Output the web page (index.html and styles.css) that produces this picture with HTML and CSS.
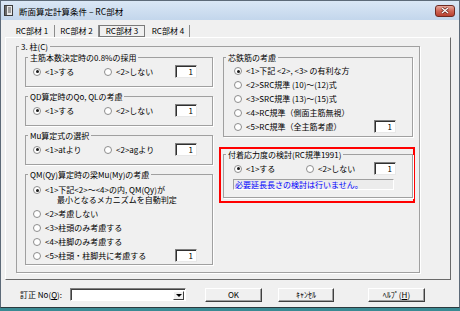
FILE: index.html
```html
<!DOCTYPE html>
<html lang="ja">
<head>
  <meta charset="UTF-8" />
  <title>断面算定計算条件 – RC部材</title>
  <link rel="stylesheet" href="styles.css">
</head>
<body>
  <div class="window">
    <div class="titlebar">
      <svg class="app-icon" width="9" height="11" viewBox="0 0 9 11">
        <rect x="0.5" y="0.5" width="8" height="10" fill="#e8e8e8" stroke="#3c3c3c"/>
        <rect x="1" y="1" width="2" height="9" fill="#6a6a6a"/>
        <path d="M4 3h3M4 5h3M4 7h3" stroke="#555" stroke-width="1"/>
      </svg>
      <span class="title">断面算定計算条件 – RC部材</span>
      <span class="close">
        <svg width="8" height="7" viewBox="0 0 8 7">
          <path d="M1 1l6 5M7 1l-6 5" stroke="#5a1a12" stroke-width="2.6"/>
          <path d="M1 1l6 5M7 1l-6 5" stroke="#fff" stroke-width="1.4"/>
        </svg>
      </span>
    </div>

    <div class="client">
      <div class="tabs">
        <span class="tab t1">RC部材 1</span>
        <span class="tab t2">RC部材 2</span>
        <span class="tab active">RC部材 3</span>
        <span class="tab t4">RC部材 4</span>
      </div>

      <div class="tab-panel">
        <fieldset class="group outer">
          <legend>3. 柱(C)</legend>
          <div class="columns">
            <div class="col">
              <fieldset class="group">
                <legend>主筋本数決定時の0.8%の採用</legend>
                <div class="choice-row">
                  <span class="opt"><span class="radio on"></span>&lt;1&gt;する</span>
                  <span class="opt"><span class="radio"></span>&lt;2&gt;しない</span>
                  <span class="num">1</span>
                </div>
              </fieldset>

              <fieldset class="group">
                <legend>QD算定時のQo, QLの考慮</legend>
                <div class="choice-row">
                  <span class="opt"><span class="radio on"></span>&lt;1&gt;する</span>
                  <span class="opt"><span class="radio"></span>&lt;2&gt;しない</span>
                  <span class="num">1</span>
                </div>
              </fieldset>

              <fieldset class="group">
                <legend>Mu算定式の選択</legend>
                <div class="choice-row">
                  <span class="opt"><span class="radio on"></span>&lt;1&gt;atより</span>
                  <span class="opt"><span class="radio"></span>&lt;2&gt;agより</span>
                  <span class="num">1</span>
                </div>
              </fieldset>

              <fieldset class="group">
                <legend>QM(Qy)算定時の梁Mu(My)の考慮</legend>
                <div class="list">
                  <span class="opt two-line">
                    <span class="radio on"></span>
                    <span>&lt;1&gt;下記&lt;2&gt;〜&lt;4&gt;の内, QM(Qy)が<br><span class="indent">最小となるメカニズムを自動判定</span></span>
                  </span>
                  <span class="opt"><span class="radio"></span>&lt;2&gt;考慮しない</span>
                  <span class="opt"><span class="radio"></span>&lt;3&gt;柱頭のみ考慮する</span>
                  <span class="opt"><span class="radio"></span>&lt;4&gt;柱脚のみ考慮する</span>
                  <div class="list-row left">
                    <span class="opt"><span class="radio"></span>&lt;5&gt;柱頭・柱脚共に考慮する</span>
                    <span class="num inline">1</span>
                  </div>
                </div>
              </fieldset>
            </div>

            <div class="col">
              <fieldset class="group">
                <legend>芯鉄筋の考慮</legend>
                <div class="list wide">
                  <span class="opt"><span class="radio on"></span>&lt;1&gt;下記 &lt;2&gt;, &lt;3&gt; の有利な方</span>
                  <span class="opt"><span class="radio"></span>&lt;2&gt;SRC規準 (10)〜(12)式</span>
                  <span class="opt"><span class="radio"></span>&lt;3&gt;SRC規準 (13)〜(15)式</span>
                  <span class="opt"><span class="radio"></span>&lt;4&gt;RC規準（側面主筋無視）</span>
                  <div class="list-row right">
                    <span class="opt"><span class="radio"></span>&lt;5&gt;RC規準（全主筋考慮）</span>
                    <span class="num inline">1</span>
                  </div>
                </div>
              </fieldset>

              <div class="highlight">
                <fieldset class="group">
                  <legend>付着応力度の検討(RC規準1991)</legend>
                  <div class="bond">
                    <div class="choice-row bond-row">
                      <span class="opt"><span class="radio on"></span>&lt;1&gt;する</span>
                      <span class="opt"><span class="radio"></span>&lt;2&gt;しない</span>
                      <span class="num">1</span>
                    </div>
                    <div class="status">必要延長長さの検討は行いません。</div>
                  </div>
                </fieldset>
              </div>
            </div>
          </div>
        </fieldset>
      </div>

      <div class="footer">
        <span class="footer-label">訂正 No(<u>Q</u>):</span>
        <span class="combo"><span class="combo-btn"><span class="arrow"></span></span></span>
        <span class="btn ok">OK</span>
        <span class="btn cancel">ｷｬﾝｾﾙ</span>
        <span class="btn help">ﾍﾙﾌﾟ(<u>H</u>)</span>
      </div>
    </div>
  </div>
</body>
</html>
```

FILE: styles.css
```css
* {
  box-sizing: border-box;
}
body {
  margin: 0;
  background-color: #3a8a93;
  font-family: "Noto Sans CJK JP", "DejaVu Sans", sans-serif;
  font-size: 8px;
  color: #000;
}
.window {
  width: 460px;
  height: 308px;
  background-color: #f0f0f0;
  border: 1px solid #5d6a78;
  border-bottom-color: #2b3a3e;
}

/* title bar */
.titlebar {
  height: 19px;
  display: flex;
  align-items: center;
  padding: 0 4px 0 3px;
  background: linear-gradient(#dae7f5, #c3d6ec);
}
.app-icon {
  margin-right: 6px;
}
.title {
  flex: 1;
  font-size: 8.5px;
  line-height: 12px;
}
.close {
  width: 20px;
  height: 12px;
  display: flex;
  align-items: center;
  justify-content: center;
  border: 1px solid #6e2a22;
  border-radius: 3px;
  background: linear-gradient(#e6a89c, #cf6555 50%, #b9402f);
}

/* client area */
.client {
  padding: 5px 4px 0 4px;
}
.tabs {
  display: flex;
  height: 12px;
  margin-left: 5px;
}
.tab {
  height: 12px;
  line-height: 12px;
  text-align: center;
  white-space: nowrap;
  border-right: 1px solid #8c8c8c;
}
.tab.t1 { width: 45px; }
.tab.t2 { width: 44px; }
.tab.t4 { width: 43px; }
.tab.active {
  width: 46px;
  margin-right: 2px;
  border: 1px solid #7a7a7a;
  line-height: 10px;
}
.tab-panel {
  width: 446px;
  height: 243px;
  padding: 3px 0 0 10px;
  border: 1px solid;
  border-color: #ffffff #6a6a6a #6a6a6a #ffffff;
}

/* group boxes */
.group {
  margin: 0;
  padding: 0;
  min-width: 0;
  border: 1px solid #a0a0a0;
  box-shadow: 1px 1px 0 #fff;
}
.group legend {
  margin-left: 2px;
  padding: 0 2px;
  line-height: 11px;
  white-space: nowrap;
}
.outer {
  width: 404px;
}
.columns {
  display: grid;
  grid-template-columns: 188px 190px;
  column-gap: 10px;
  align-items: start;
  padding: 0 0 7px 8px;
}
.col {
  display: flex;
  flex-direction: column;
  gap: 4px;
}

/* options */
.choice-row {
  display: grid;
  grid-template-columns: 71px 71px 22px;
  align-items: center;
  height: 13px;
  margin: 2px 0 8px 7px;
}
.opt {
  display: flex;
  align-items: center;
  white-space: nowrap;
  line-height: 10px;
}
.radio {
  flex: none;
  width: 8px;
  height: 8px;
  margin-right: 4px;
  border-radius: 50%;
  border: 1px solid #8d8d8d;
  background-color: #fff;
  display: inline-flex;
  align-items: center;
  justify-content: center;
}
.radio.on::after {
  content: "";
  width: 3px;
  height: 3px;
  border-radius: 50%;
  background-color: #1a1a1a;
}
.num {
  width: 22px;
  height: 13px;
  padding-right: 3px;
  text-align: right;
  line-height: 11px;
  background-color: #fff;
  border: 1px solid;
  border-color: #808080 #e8e8e8 #e8e8e8 #808080;
  box-shadow: inset 1px 1px 0 #303030;
}
.num.inline {
  margin: -2px 0 -1px;
}
.list {
  display: flex;
  flex-direction: column;
  gap: 4px;
  padding: 5px 0 3px 7px;
}
.list.wide {
  padding: 3px 0 4px 10px;
}
.two-line {
  align-items: flex-start;
}
.two-line .radio {
  margin-top: 1px;
}
.indent {
  padding-left: 12px;
}
.list-row {
  display: grid;
  align-items: center;
  height: 10px;
}
.list-row.left { grid-template-columns: 142px 22px; }
.list-row.right { grid-template-columns: 140px 22px; }

/* highlighted bond check */
.highlight {
  border: 2px solid #ff0000;
  margin: 6px -2px 0 -4px;
  padding: 0 0 3px 2px;
}
.bond {
  padding: 2px 0 7px 10px;
}
.bond-row {
  grid-template-columns: 72px 68px 22px;
  margin: 0;
}
.status {
  width: 161px;
  height: 11px;
  margin: 4px 0 0 -1px;
  padding-left: 1px;
  line-height: 9px;
  color: #0000ff;
  background-color: #ececec;
  border: 1px solid;
  border-color: #a0a0a0 #ffffff #ffffff #a0a0a0;
  white-space: nowrap;
}

/* footer */
.footer {
  display: flex;
  align-items: flex-start;
  height: 14px;
  margin-top: 8px;
  padding-left: 15px;
}
.footer-label {
  width: 50px;
  line-height: 13px;
  white-space: nowrap;
}
.combo {
  width: 116px;
  height: 13px;
  padding: 2px 1px 1px 2px;
  display: flex;
  justify-content: flex-end;
  background-color: #fff;
  border: 1px solid;
  border-color: #808080 #fff #fff #808080;
  box-shadow: inset 1px 1px 0 #404040;
}
.combo-btn {
  width: 11px;
  height: 9px;
  display: flex;
  align-items: center;
  justify-content: center;
  background-color: #f0f0f0;
  border: 1px solid;
  border-color: #fff #404040 #404040 #fff;
}
.arrow {
  width: 0;
  height: 0;
  border-left: 3px solid transparent;
  border-right: 3px solid transparent;
  border-top: 3px solid #000;
}
.btn {
  height: 14px;
  line-height: 12px;
  text-align: center;
  white-space: nowrap;
  background-color: #f0f0f0;
  border: 1px solid;
  border-color: #fff #404040 #404040 #fff;
  box-shadow: inset -1px -1px 0 #a0a0a0;
}
.btn.ok { width: 57px; margin-left: 19px; }
.btn.cancel { width: 56px; margin-left: 16px; }
.btn.help { width: 57px; margin-left: 34px; }
```
